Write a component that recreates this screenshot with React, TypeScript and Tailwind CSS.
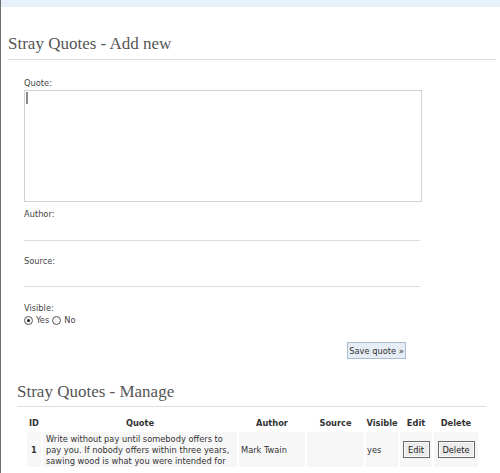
import React from "react";

const sans = { fontFamily: '"DejaVu Sans Condensed", "DejaVu Sans", sans-serif' };

function Radio({ checked }: { checked?: boolean }) {
  return (
    <span className="inline-flex h-[9px] w-[9px] items-center justify-center rounded-full border border-[#5a5a5a] bg-[#f4f4f4]">
      {checked ? <span className="h-[3px] w-[3px] rounded-full bg-[#222]" /> : null}
    </span>
  );
}

export default function App() {
  return (
    <div
      className="h-[473px] w-[500px] overflow-hidden border-l border-[#6f6f6f] bg-white text-[#333]"
      style={sans}
    >
      <div className="h-[7px] bg-[#e7f1fc]" />

      <h2 className="ml-[7px] mt-[27px] w-[488px] border-b border-[#dedede] pb-[5px] font-['Liberation_Serif',serif] text-[17px] leading-[20px] text-[#555]">
        Stray Quotes - Add new
      </h2>

      <div className="ml-[23px] text-[9.2px] leading-[12px]">
        <div className="mt-[17px] text-[#444]">Quote:</div>
        <div className="relative mt-[1px] h-[112px] w-[398px]">
          <textarea className="block h-full w-full resize-none border border-[#d2d2d2] bg-white outline-none" />
          <span className="absolute left-[2px] top-[2px] h-[12px] w-[2px] bg-[#8a8a8a]" />
        </div>

        <div className="mt-[6px] text-[#444]">Author:</div>
        <div className="h-[21px] w-[396px] border-b border-[#dcdcdc]" />

        <div className="mt-[14px] text-[#444]">Source:</div>
        <div className="h-[20px] w-[396px] border-b border-[#dcdcdc]" />

        <div className="mt-[15px] text-[#444]">Visible:</div>
        <div className="flex h-[12px] items-center text-[#444]">
          <Radio checked />
          <span className="ml-[3px]">Yes</span>
          <span className="ml-[3px] flex items-center">
            <Radio />
          </span>
          <span className="ml-[3px]">No</span>
        </div>

        <button className="ml-[323px] mt-[16px] flex h-[17px] w-[59px] items-center justify-center border border-[#a9bdd1] bg-[#e6edf4] text-[9.2px] leading-none text-[#333]">
          Save quote »
        </button>
      </div>

      <h2 className="ml-[16px] mt-[23px] w-[469px] border-b border-[#dedede] pb-[4px] font-['Liberation_Serif',serif] text-[17px] leading-[20px] text-[#555]">
        Stray Quotes - Manage
      </h2>

      <table className="ml-[24px] mt-[6px] w-[455px] table-fixed border-separate border-spacing-[2px] text-[9.2px] leading-[11px] text-[#333]">
        <colgroup>
          <col className="w-[14px]" />
          <col className="w-[194px]" />
          <col className="w-[66px]" />
          <col className="w-[57px]" />
          <col className="w-[32px]" />
          <col className="w-[32px]" />
          <col className="w-[44px]" />
        </colgroup>
        <thead>
          <tr className="h-[15px] font-bold">
            <th className="p-0 text-center">ID</th>
            <th className="p-0 text-center">Quote</th>
            <th className="p-0 text-center">Author</th>
            <th className="p-0 text-center">Source</th>
            <th className="whitespace-nowrap p-0 text-center">Visible</th>
            <th className="p-0 text-center">Edit</th>
            <th className="p-0 text-center">Delete</th>
          </tr>
        </thead>
        <tbody>
          <tr className="h-[35px]">
            <td className="bg-[#f7f7f7] p-0 text-center align-middle font-bold">1</td>
            <td className="whitespace-nowrap bg-[#f7f7f7] py-0 pl-[3px] pr-0 align-middle">
              Write without pay until somebody offers to
              <br />
              pay you. If nobody offers within three years,
              <br />
              sawing wood is what you were intended for
            </td>
            <td className="bg-[#f7f7f7] py-0 pl-[2px] pr-0 align-middle">Mark Twain</td>
            <td className="bg-[#f7f7f7] p-0 align-middle"></td>
            <td className="bg-[#f7f7f7] py-0 pl-[1px] pr-0 align-middle">yes</td>
            <td className="bg-[#f7f7f7] p-0 align-middle">
              <div className="flex justify-center">
                <button className="flex h-[17px] w-[27px] items-center justify-center border border-[#6a6a6a] bg-[#ebebeb] text-[9.2px] leading-none text-[#222] shadow-[inset_0_0_0_1px_#fafafa]">
                  Edit
                </button>
              </div>
            </td>
            <td className="bg-[#f7f7f7] p-0 align-middle">
              <div className="flex justify-center">
                <button className="flex h-[17px] w-[37px] items-center justify-center border border-[#6a6a6a] bg-[#ebebeb] text-[9.2px] leading-none text-[#222] shadow-[inset_0_0_0_1px_#fafafa]">
                  Delete
                </button>
              </div>
            </td>
          </tr>
        </tbody>
      </table>
    </div>
  );
}
